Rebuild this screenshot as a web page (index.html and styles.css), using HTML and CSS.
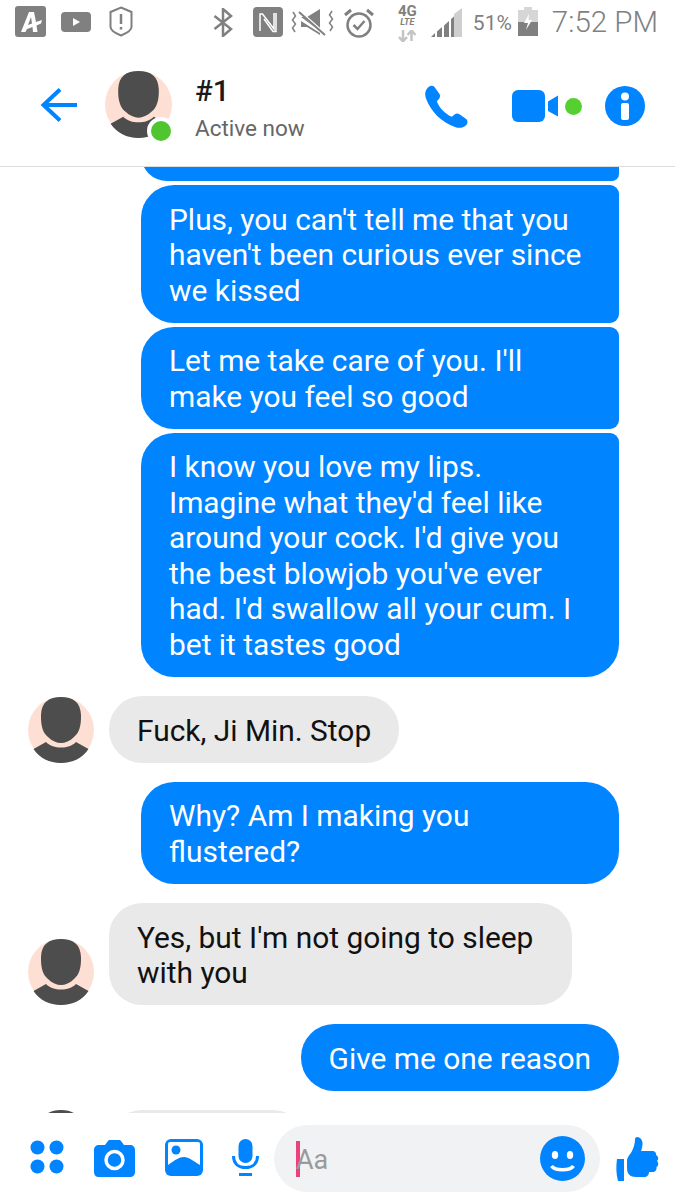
FILE: index.html
```html
<!DOCTYPE html>
<html lang="en">
<head>
    <meta charset="UTF-8">
    <title>Messenger</title>
    <link rel="stylesheet" href="styles.css">
</head>
<body>
    <svg class="defs" width="0" height="0">
        <symbol id="person" viewBox="0 0 66 66">
            <circle cx="33" cy="33" r="33" fill="#fde0d3"/>
            <path d="M33 0C21 0 13.500 5 13 18C12.700 29 15 36 20 40C24 44 29 46 33 46C37 46 42 44 46 40C51 36 53.300 29 53 18C52.500 5 45 0 33 0Z" fill="#4d4d4d"/>
            <path d="M5.500 52L18 45C22 49 27 50.500 33 50.500C39 50.500 44 49 48 45L60.500 52C54.500 61 44.500 66 33 66C21.500 66 11.500 61 5.500 52Z" fill="#4d4d4d"/>
        </symbol>
    </svg>
    <div class="phone">
        <div class="status-bar">
            <div class="status-left">
                <svg width="31" height="31" viewBox="0 0 31 31"><rect width="31" height="31" rx="3" fill="#808080"/><path d="M6 26L14 6H19L21 16L27 14L26 17.500L21.500 19.500L22.500 26H18L17.500 21L12 23L10.500 26ZM13 19L17 17.500L16 11Z" fill="#fff"/></svg>
                <svg class="icon-yt" width="30" height="20" viewBox="0 0 30 20"><rect width="30" height="20" rx="4" fill="#808080"/><path d="M12 6L19 10L12 14Z" fill="#fff"/></svg>
                <svg class="icon-shield" width="24" height="31" viewBox="0 0 24 31"><path d="M12 1.500L22.500 6V21C22.500 24 17 27.500 12 29.500C7 27.500 1.500 24 1.500 21V6Z" fill="none" stroke="#808080" stroke-width="2"/><path d="M12 8V18M12 21V23.500" stroke="#808080" stroke-width="2.500"/></svg>
            </div>
            <div class="status-right">
                <svg width="21" height="29" viewBox="0 0 21 29"><path d="M1.500 8L18 21L10 28V1L18 8L1.500 21" fill="none" stroke="#808080" stroke-width="2.500"/></svg>
                <svg class="icon-nfc" width="30" height="30" viewBox="0 0 30 30"><rect width="30" height="30" rx="4" fill="#808080"/><path d="M7 24V7H9.500L21 22V6" fill="none" stroke="#fff" stroke-width="1.500"/><path d="M11 12L20 24.500H23V6" fill="none" stroke="#fff" stroke-width="1.500"/></svg>
                <svg class="icon-mute" width="43" height="28" viewBox="0 0 43 28"><path d="M10 9H16L29 1V23Z" fill="#808080"/><path d="M10 13V19H16L29 27V25Z" fill="#808080"/><path d="M8 3L35 27" stroke="#fff" stroke-width="3"/><path d="M8 4L34 27" stroke="#808080" stroke-width="2"/><path d="M2 4L4.500 8L1.500 12L4.500 16L1.500 20L4 24M41 3L38.500 7L41.500 11L38.500 15L41.500 19L39 23" fill="none" stroke="#808080" stroke-width="1.500"/></svg>
                <svg class="icon-alarm" width="30" height="31" viewBox="0 0 30 31"><circle cx="15" cy="17" r="11.500" fill="none" stroke="#808080" stroke-width="2.500"/><path d="M9.500 17L13.500 21L20.500 13" fill="none" stroke="#808080" stroke-width="2.500"/><path d="M1 7L7 2M29 7L23 2" stroke="#808080" stroke-width="3"/></svg>
                <div class="net">
                    <span class="net-g">4G</span>
                    <span class="net-lte">LTE</span>
                    <svg class="net-arrows" width="18" height="12" viewBox="0 0 18 12"><path d="M5 0V11M1 7L5 11.500L9 7" fill="none" stroke="#c4c4c4" stroke-width="2.500"/><path d="M13.500 11V1M9.500 5L13.500 .5L17.500 5" fill="none" stroke="#c4c4c4" stroke-width="2.500"/></svg>
                </div>
                <svg class="icon-signal" width="31" height="29" viewBox="0 0 31 29"><path d="M23 6L31 0V29H23Z" fill="#cfcfcf"/><path d="M0 29L4 25V29ZM6 23.500L11 19V29H6ZM13 17.500L18 13V29H13ZM20 11L23 8.500V29H20Z" fill="#808080"/></svg>
                <span class="battery-pct">51%</span>
                <svg class="icon-battery" width="20" height="29" viewBox="0 0 20 29"><path d="M6 0H14V3H20V29H0V3H6Z" fill="#d6d6d6"/><path d="M0 15H20V29H0Z" fill="#808080"/><path d="M11 7L6 16H10L8 23L14 13H10.500Z" fill="#fff"/></svg>
                <span class="clock">7:52 PM</span>
            </div>
        </div>

        <header class="chat-header">
            <svg class="back" width="38" height="36" viewBox="0 0 38 36"><path d="M37 18H3.500M20 2.500L3.500 18L20 33.500" fill="none" stroke="#0084ff" stroke-width="4"/></svg>
            <div class="header-avatar">
                <svg width="67" height="67"><use href="#person"/></svg>
                <span class="online"></span>
            </div>
            <div class="contact">
                <div class="contact-name">#1</div>
                <div class="contact-status">Active now</div>
            </div>
            <div class="header-actions">
                <svg width="43" height="43" viewBox="0 0 43 43"><path d="M3 2.500C5 .5 8 .3 9.500 2L14.500 9C15.500 11 15 13 13.500 14.500L11.800 16.200C14 22.500 20 29 27 31.800L28.800 30C30.500 28.300 32.500 28 34.500 29.200L41.500 34.300C43 36 42.800 38.800 40.800 40.500C38 43 34 43.500 30 42C17 37.500 6 27 1 13.500C-.5 9.500 0 5.500 3 2.500Z" fill="#0084ff"/></svg>
                <svg class="icon-video" width="46" height="32" viewBox="0 0 46 32"><rect width="33" height="32" rx="6" fill="#0084ff"/><path d="M36 11.500L46 5.500V26.500L36 21Z" fill="#0084ff"/></svg>
                <span class="video-dot"></span>
                <svg class="icon-info" width="40" height="40" viewBox="0 0 40 40"><circle cx="20" cy="20" r="20" fill="#0084ff"/><circle cx="20" cy="10.500" r="4" fill="#fff"/><rect x="16" y="17" width="8" height="17" rx="2" fill="#fff"/></svg>
            </div>
        </header>

        <main class="messages">
            <div class="bubble out cut"></div>
            <div class="bubble out mid">Plus, you can't tell me that you haven't been curious ever since we kissed</div>
            <div class="bubble out mid">Let me take care of you. I'll<br>make you feel so good</div>
            <div class="bubble out last">I know you love my lips.<br>Imagine what they'd feel like around your cock. I'd give you the best blowjob you've ever had. I'd swallow all your cum. I bet it tastes good</div>

            <div class="row">
                <svg class="avatar" width="66" height="66"><use href="#person"/></svg>
                <div class="bubble in">Fuck, Ji Min. Stop</div>
            </div>

            <div class="bubble out single">Why? Am I making you<br>flustered?</div>

            <div class="row">
                <svg class="avatar" width="66" height="66"><use href="#person"/></svg>
                <div class="bubble in wrapped">Yes, but I'm not going to sleep with you</div>
            </div>

            <div class="bubble out single short">Give me one reason</div>

            <div class="row">
                <svg class="avatar" width="66" height="66"><use href="#person"/></svg>
                <div class="bubble in cut-off"></div>
            </div>
        </main>

        <footer class="composer">
            <svg class="icon-apps" width="34" height="34" viewBox="0 0 34 34"><circle cx="7.500" cy="7.500" r="7" fill="#0084ff"/><circle cx="26.500" cy="7.500" r="7" fill="#0084ff"/><circle cx="7.500" cy="26.500" r="7" fill="#0084ff"/><circle cx="26.500" cy="26.500" r="7" fill="#0084ff"/></svg>
            <svg class="icon-camera" width="41" height="37" viewBox="0 0 41 37"><path d="M5 5H11L14 1C14.500 .3 15 0 16 0H25C26 0 26.500 .3 27 1L30 5H36C39 5 41 7 41 10V32C41 35 39 37 36 37H5C2 37 0 35 0 32V10C0 7 2 5 5 5Z" fill="#0084ff"/><circle cx="20.500" cy="20" r="8.500" fill="none" stroke="#fff" stroke-width="3.500"/></svg>
            <svg class="icon-photo" width="38" height="37" viewBox="0 0 38 37"><rect width="38" height="37" rx="6" fill="#0084ff"/><rect x="3" y="3" width="32" height="28" rx="2" fill="#fff"/><circle cx="11" cy="11" r="4.500" fill="#0084ff"/><path d="M3 26C10 21 14 18 19 18C24 18 28 22 35 26V34H3Z" fill="#0084ff"/></svg>
            <svg class="icon-mic" width="27" height="37" viewBox="0 0 27 37"><rect x="6.500" y="0" width="14" height="24" rx="7" fill="#0084ff"/><path d="M1.500 17C1.500 25 7 28.500 13.500 28.500C20 28.500 25.500 25 25.500 17" fill="none" stroke="#0084ff" stroke-width="3"/><path d="M7 35.500H20" stroke="#0084ff" stroke-width="3"/></svg>
            <div class="input-pill">
                <span class="caret"></span>
                <span class="placeholder">Aa</span>
                <svg class="icon-smile" width="45" height="45" viewBox="0 0 45 45"><circle cx="22.500" cy="22.500" r="22.500" fill="#0084ff"/><ellipse cx="15" cy="19" rx="3.200" ry="4" fill="#fff"/><ellipse cx="30" cy="19" rx="3.200" ry="4" fill="#fff"/><path d="M11.500 30C15 35 30 35 33.500 30" fill="none" stroke="#fff" stroke-width="3.500"/></svg>
            </div>
            <svg class="icon-like" width="43" height="44" viewBox="0 0 43 44"><path d="M1 22H8V44H2C0 37 0 29 1 22Z" fill="#0084ff"/><path d="M21 0C25 0 27 4 26.500 8C26 11 25.500 13 25 14H36C39 14 40.500 16 40 18C42.500 19.500 43 22 41 24C43 26 42.500 29 40.500 30C41 32.500 39.500 35 37 35H33C33 38 31 40 28 40H20C14 40 11 37 11 31V24C11 20 14 18 16 14C18 10 19 6 19 2C19 1 20 0 21 0Z" fill="#0084ff"/></svg>
        </footer>
    </div>
</body>
</html>
```

FILE: styles.css
```css
* {
    box-sizing: border-box;
}
body {
    margin: 0;
    background-color: #fff;
    font-family: Roboto, "Liberation Sans", sans-serif;
}
.defs {
    display: block;
    height: 0;
}
.phone {
    width: 675px;
    height: 1200px;
    display: flex;
    flex-direction: column;
    overflow: hidden;
}
svg {
    display: block;
    flex: none;
}

/* status bar */
.status-bar {
    height: 44px;
    padding: 6px 17px 0 15px;
    display: flex;
    justify-content: space-between;
    align-items: flex-start;
    color: #808080;
}
.status-left {
    display: flex;
    align-items: flex-start;
}
.icon-yt {
    margin: 6px 0 0 15px;
}
.icon-shield {
    margin-left: 18px;
}
.status-right {
    display: flex;
    align-items: flex-start;
    padding-top: 2px;
}
.icon-nfc {
    margin: -1px 0 0 19px;
}
.icon-mute {
    margin-left: 8px;
}
.icon-alarm {
    margin-left: 10px;
}
.net {
    width: 21px;
    margin: -3px 0 0 23px;
    display: flex;
    flex-direction: column;
    align-items: center;
    font-weight: 700;
}
.net-g {
    font-size: 15px;
    line-height: 13px;
    height: 13px;
}
.net-lte {
    font-size: 9px;
    line-height: 9px;
    height: 9px;
    font-style: italic;
}
.net-arrows {
    margin-top: 3px;
}
.icon-signal {
    margin-left: 13px;
}
.battery-pct {
    margin: 3px 0 0 11px;
    font-size: 21px;
    line-height: 24px;
}
.icon-battery {
    margin: -1px 0 0 6px;
}
.clock {
    margin: -3px 0 0 14px;
    font-size: 29.500px;
    line-height: 35px;
    font-weight: 300;
    white-space: nowrap;
}

/* header */
.chat-header {
    height: 123px;
    padding: 27px 30px 0 40px;
    display: flex;
    align-items: flex-start;
    border-bottom: 1px solid #dcdcdc;
}
.back {
    margin-top: 16px;
}
.header-avatar {
    position: relative;
    margin-left: 27px;
}
.online {
    position: absolute;
    right: -3px;
    bottom: -7px;
    width: 28px;
    height: 28px;
    border: 4px solid #fff;
    border-radius: 50%;
    background-color: #4fc62f;
}
.contact {
    margin: 3px 0 0 23px;
}
.contact-name {
    font-size: 29.500px;
    line-height: 34px;
    font-weight: 500;
    color: #1a1a1a;
}
.contact-status {
    margin-top: 6px;
    font-size: 22.500px;
    line-height: 28px;
    color: #666;
}
.header-actions {
    margin-left: auto;
    display: flex;
    align-items: center;
    height: 70px;
}
.icon-video {
    margin-left: 44px;
}
.video-dot {
    width: 17px;
    height: 17px;
    margin-left: 7px;
    border-radius: 50%;
    background-color: #55d030;
}
.icon-info {
    margin-left: 23px;
}

/* messages */
.messages {
    flex: 1;
    min-height: 0;
    overflow: hidden;
    padding: 0 56px 0 28px;
    display: flex;
    flex-direction: column;
    align-items: flex-end;
}
.bubble {
    font-size: 29.900px;
    line-height: 35.500px;
    padding: 16.500px 28px 14.500px;
    border-radius: 33px;
}
.out {
    width: 478px;
    background-color: #0084ff;
    color: #fff;
}
.cut {
    flex: none;
    height: 52px;
    margin-top: -38px;
    border-radius: 33px 9px 9px 33px;
}
.mid {
    margin-top: 4px;
    border-radius: 33px 9px 9px 33px;
}
.last {
    margin-top: 4px;
    border-radius: 33px 9px 33px 33px;
}
.single {
    margin-top: 19px;
}
.short {
    width: auto;
}
.row {
    align-self: stretch;
    display: flex;
    align-items: flex-end;
    gap: 15px;
    margin-top: 19.500px;
}
.in {
    background-color: #e9e9e9;
    color: #111;
}
.wrapped {
    width: 463px;
}
.cut-off {
    width: 197px;
    height: 66px;
}

/* composer */
.composer {
    flex: none;
    height: 87px;
    position: relative;
    background-color: #fff;
    padding: 27px 0 0 30px;
    display: flex;
    align-items: flex-start;
}
.icon-camera {
    margin-left: 30px;
}
.icon-photo {
    margin: -1px 0 0 30px;
}
.icon-mic {
    margin: -1px 0 0 29px;
}
.input-pill {
    width: 326px;
    height: 67px;
    margin: -15px 0 0 15px;
    padding: 0 15px 0 22px;
    display: flex;
    align-items: center;
    background-color: #f1f2f4;
    border-radius: 34px;
}
.caret {
    width: 4px;
    height: 36px;
    background-color: #e8437f;
}
.placeholder {
    margin: 3px 0 0 -4px;
    font-size: 27px;
    color: #9a9a9a;
}
.icon-smile {
    margin-left: auto;
    margin-top: -1px;
}
.icon-like {
    margin: -3px 0 0 16px;
}
```
